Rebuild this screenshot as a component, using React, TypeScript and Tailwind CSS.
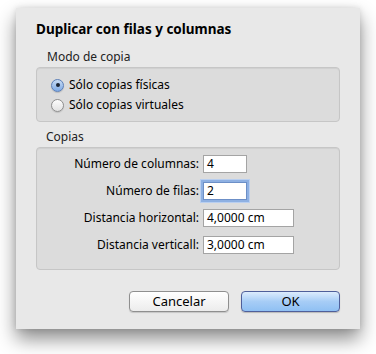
const font = { fontFamily: '"Noto Sans", "DejaVu Sans", sans-serif' };

function Radio({ checked, label }: { checked?: boolean; label: string }) {
  return (
    <div className="flex items-center gap-[5px] h-[20px]">
      {checked ? (
        <span className="w-[13px] h-[13px] rounded-full border border-[#5b7fb8] bg-gradient-to-b from-[#c9dcf3] to-[#7eaae6] flex items-center justify-center shadow-[0_1px_1px_rgba(0,0,0,0.15)]">
          <span className="w-[4px] h-[4px] rounded-full bg-[#1b2433]" />
        </span>
      ) : (
        <span className="w-[13px] h-[13px] rounded-full border border-[#8e8e8e] bg-gradient-to-b from-[#fdfdfd] to-[#e2e2e2] shadow-[0_1px_1px_rgba(0,0,0,0.12)]" />
      )}
      <span className="text-[12px] leading-[16px] text-black">{label}</span>
    </div>
  );
}

function Field({ label, value, wide, focused }: { label: string; value: string; wide?: boolean; focused?: boolean }) {
  return (
    <>
      <span className="text-[12px] text-black text-right leading-[18px]">{label}</span>
      <div
        className={
          'h-[18px] bg-white border px-[3px] text-[12px] leading-[16px] text-black ' +
          (wide ? 'w-[91px] ' : 'w-[44px] ') +
          (focused
            ? 'border-[#6c8fc7] shadow-[0_0_0_2px_#8eb0e2,0_0_0_3px_#b9cff0]'
            : 'border-[#a4a4a4]')
        }
      >
        {value}
      </div>
    </>
  );
}

export default function App() {
  return (
    <div className="w-[376px] h-[354px] bg-white overflow-hidden" style={font}>
      <div className="ml-[16px] mt-[8px] w-[344px] h-[321px] bg-[#e8e8e8] flex flex-col px-[20px] shadow-[0_10px_18px_rgba(0,0,0,0.45),0_0_6px_rgba(0,0,0,0.12)]">
        <h1 className="mt-[13px] text-[13.5px] font-bold leading-[16px] text-black">Duplicar con filas y columnas</h1>

        <span className="mt-[13px] ml-[11px] text-[12px] leading-[14px] text-[#222]">Modo de copia</span>
        <div className="mt-[3px] h-[55px] rounded-[4px] border border-[#c6c6c6] bg-[#dcdcdc] flex flex-col pl-[14px] pt-[7px] shadow-[inset_0_1px_1px_rgba(0,0,0,0.06)]">
          <Radio checked label="Sólo copias físicas" />
          <Radio label="Sólo copias virtuales" />
        </div>

        <span className="mt-[8px] ml-[10px] text-[12px] leading-[14px] text-[#222]">Copias</span>
        <div className="mt-[3px] h-[123px] rounded-[4px] border border-[#c6c6c6] bg-[#dcdcdc] pt-[7px] shadow-[inset_0_1px_1px_rgba(0,0,0,0.06)]">
          <div className="grid grid-cols-[162px_auto] gap-x-[4px] gap-y-[9px] items-center justify-start">
            <Field label="Número de columnas:" value="4" />
            <Field label="Número de filas:" value="2" focused />
            <Field label="Distancia horizontal:" value="4,0000 cm" wide />
            <Field label="Distancia verticall:" value="3,0000 cm" wide />
          </div>
        </div>

        <div className="mt-[21px] flex justify-end gap-[12px]">
          <button className="w-[100px] h-[21px] rounded-[4px] border border-[#8f8f8f] bg-gradient-to-b from-[#ffffff] to-[#ececec] text-[13px] text-black leading-[19px] shadow-[0_1px_1px_rgba(0,0,0,0.15)]">
            Cancelar
          </button>
          <button className="w-[99px] h-[21px] rounded-[4px] border border-[#4f5f9a] bg-gradient-to-b from-[#dcecfd] via-[#a7cdf6] to-[#8fc0f3] text-[13px] text-black leading-[19px] shadow-[0_1px_1px_rgba(0,0,0,0.2)]">
            OK
          </button>
        </div>
      </div>
    </div>
  );
}
